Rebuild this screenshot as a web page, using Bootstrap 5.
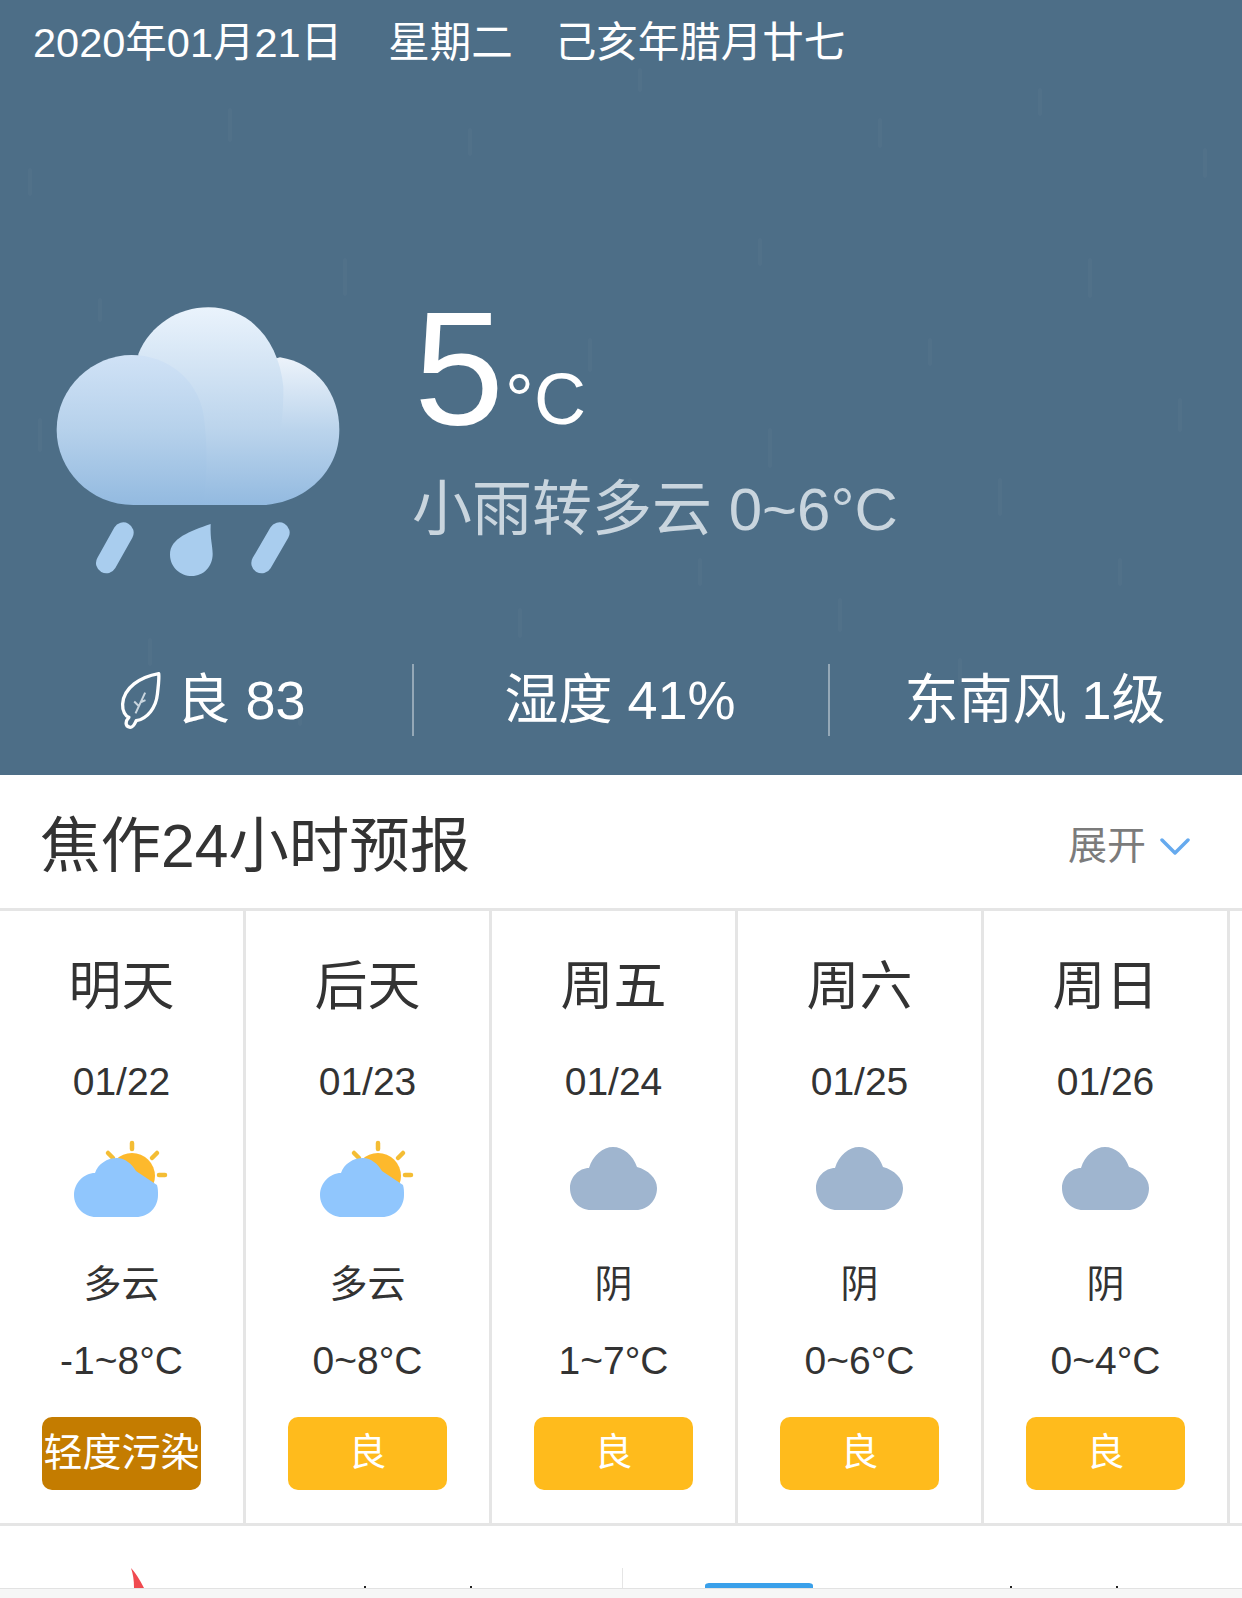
<!DOCTYPE html>
<html lang="zh">
<head>
  <meta charset="UTF-8">
  <title>焦作天气</title>
  <link href="https://cdn.jsdelivr.net/npm/bootstrap@5.3.0/dist/css/bootstrap.min.css" rel="stylesheet">
  <style>
    body { width: 1242px; height: 1598px; overflow: hidden; font-family: "Liberation Sans", "Noto Sans CJK SC", sans-serif; color: #333; background: #fff; }
    .wx-head { height: 775px; background: #4d6e87; color: #fff; position: relative; overflow: hidden; }
    .wx-rain { position: absolute; left: 0; top: 0; }
    .wx-head > div { position: relative; }
    .wx-date { padding: 18px 0 0 33px; height: 280px; font-size: 41.5px; line-height: 50px; }
    .wx-date span { margin-right: 46px; }
    .wx-date span + span { margin-right: 42px; }
    .wx-temp { font-size: 162px; line-height: 1; margin-top: 7px; height: 160px; margin-left: 2px; }
    .wx-unit { font-size: 72px; margin-left: 1px; }
    .wx-desc { font-size: 60px; line-height: 70px; color: #c9d5de; margin-top: 28px; }
    .wx-stats { font-size: 54px; line-height: 72px; margin-top: 64px; }
    .wx-stat { height: 72px; }
    .wx-stat-first { width: 412px; padding-left: 14px; }
    .wx-stat-mid { width: 414px; padding-right: 2px; }
    .wx-stat-last { padding-right: 2px; }
    .wx-leaf { margin-right: 14px; }
    .wx-sep { width: 2px; height: 72px; background: rgba(255,255,255,.4); }
    .wx-title { height: 133px; padding: 10px 52px 0 40px; }
    .wx-title h1 { font-size: 60.5px; margin: 0; font-weight: 400; color: #333; }
    .wx-more { font-size: 39px; color: #7b7b7b; margin-right: 14px; }
    .wx-days { border-top: 3px solid #e5e5e5; border-bottom: 3px solid #e5e5e5; height: 618px; }
    .wx-day { width: 246px; height: 612px; border-right: 3px solid #e5e5e5; padding-top: 51px; }
    .wx-name { font-size: 53px; line-height: 50px; }
    .wx-line { font-size: 39px; line-height: 50px; color: #333; }
    .wx-d { margin-top: 45px; }
    .wx-ico { display: block; margin: 33px auto 0; }
    .wx-cond { margin-top: 39px; font-size: 38px; }
    .wx-range { margin-top: 27px; }
    .wx-aqi { width: 159px; height: 73px; margin: 31px auto 0; border-radius: 10px; background: #ffbb1c; color: #fff; font-size: 38px; line-height: 71px; }
    .wx-aqi-bad { background: #c47c00; font-size: 39px; }
    .wx-tail { height: 62px; }
    .wx-foot { height: 10px; background: #f6f6f6; border-top: 1px solid #e2e2e2; }
  </style>
</head>
<body>

<div class="wx-head d-flex flex-column">
  <svg class="wx-rain" width="1242" height="775" stroke="#fff" stroke-opacity=".025" stroke-width="4" stroke-linecap="round">
    <path d="M40 420v30M100 300v20M150 640v24M230 110v30M300 700v24M345 260v34M470 130v24M520 610v26M590 340v30M640 70v20M700 560v24M770 430v36M760 240v24M840 600v30M880 120v26M930 340v24M1000 480v34M1040 90v24M1090 260v36M1120 560v24M1180 400v30M1205 150v26M630 480v24M960 660v24M30 170v24"/>
  </svg>
  <div class="wx-date"><span>2020年01月21日</span><span>星期二</span><span>己亥年腊月廿七</span></div>
  <div class="d-flex">
    <svg width="400" height="320" viewBox="0 0 1200 960">
      <defs>
        <linearGradient id="gr" gradientUnits="userSpaceOnUse" x1="0" y1="225" x2="0" y2="675"><stop offset="0" stop-color="#eef4fb"/><stop offset=".5" stop-color="#bbd4ec"/><stop offset="1" stop-color="#93bae0"/></linearGradient>
        <linearGradient id="gm" gradientUnits="userSpaceOnUse" x1="0" y1="82" x2="0" y2="675"><stop offset="0" stop-color="#eaf3fc"/><stop offset=".62" stop-color="#bbd4ec"/><stop offset="1" stop-color="#93bae0"/></linearGradient>
        <linearGradient id="gl" gradientUnits="userSpaceOnUse" x1="0" y1="225" x2="0" y2="675"><stop offset="0" stop-color="#d0e2f6"/><stop offset=".5" stop-color="#b6d1eb"/><stop offset="1" stop-color="#93bae0"/></linearGradient>
      </defs>
      <path fill="url(#gr)" d="M600 675V300L840 232C950 250 1018 340 1018 450 1018 585 900 675 780 675Z"/>
      <path fill="url(#gm)" d="M415 222C450 135 535 82 625 82 740 82 835 170 850 320 852 420 830 560 800 675H405Z"/>
      <path fill="url(#gl)" d="M400 675C270 675 170 570 170 450 170 320 280 225 395 225 500 225 590 295 610 400 625 500 620 600 610 675Z"/>
      <g stroke="#a9cdee" stroke-width="62" stroke-linecap="round"><path d="M370 758 319 849M838 758 785 849"/></g>
      <path fill="#a9cdee" d="M632 732c-2 45 6 65 6 90 0 38-28 66-62 66-36 0-66-28-66-64 0-50 60-70 122-92z"/>
    </svg>
    <div class="ms-2 ps-1">
      <div class="wx-temp">5<span class="wx-unit">°C</span></div>
      <div class="wx-desc">小雨转多云 0~6°C</div>
    </div>
  </div>
  <div class="wx-stats d-flex align-items-center">
    <div class="wx-stat wx-stat-first d-flex align-items-center justify-content-center">
      <svg class="wx-leaf" width="42" height="58" viewBox="180 100 125 175" fill="none" stroke="#fff" stroke-width="10" stroke-linejoin="round">
        <path d="M296 108C240 118 190 150 187 200 186 222 196 236 206 240 196 250 192 268 210 270 220 270 224 258 228 250 262 244 288 210 292 170 294 148 298 125 296 108Z"/>
        <path stroke="#c9d5de" stroke-width="6" d="M255 165 226 228M235 205 222 192M240 195 256 188"/>
      </svg>
      <span>良 83</span>
    </div>
    <div class="wx-sep"></div>
    <div class="wx-stat wx-stat-mid text-center">湿度 41%</div>
    <div class="wx-sep"></div>
    <div class="wx-stat wx-stat-last text-center flex-fill">东南风 1级</div>
  </div>
</div>

<div class="wx-title d-flex align-items-center justify-content-between">
  <h1>焦作24小时预报</h1>
  <div class="d-flex align-items-center">
    <span class="wx-more">展开</span>
    <svg width="30" height="18" viewBox="0 0 30 18" fill="none" stroke="#66aaee" stroke-width="3.5" stroke-linecap="round" stroke-linejoin="round"><path d="M2 2 15 15 28 2"/></svg>
  </div>
</div>

<div class="wx-days d-flex" id="days"></div>

<div class="wx-tail">
  <svg width="1242" height="62" class="d-block">
    <path fill="#f04a50" d="M131 42c4 4 9 12 13 20h-10c0-8-1-14-3-20z"/>
    <rect x="622" y="42" width="1" height="20" fill="#e5e5e5"/>
    <path fill="#3aa0ea" d="M705 62v-2c0-3 3-3 6-3h96c3 0 6 0 6 3v2z"/>
    <path fill="#222" d="M364 60h2v2h-2zM470 60h2v2h-2zM1010 60h2v2h-2zM1116 60h2v2h-2z"/>
  </svg>
</div>
<div class="wx-foot"></div>

<script>
// 五天预报
const sunIcon = '<svg class="wx-ico" width="100" height="80" viewBox="0 0 100 80">' +
  '<g stroke="#f4bd34" stroke-width="4.5" stroke-linecap="round"><path d="M60 3V9M36 13 41 18M85 13 80 18M87 35H93"/></g>' +
  '<circle cx="60" cy="36" r="23" fill="#fdb92c"/>' +
  '<path fill="#90c6fd" d="M24 77C12 77 2 67 2 55 2 43 12 33 23 33 26 24 35 18 45 18 53 18 60 24 64 31L85 45C86 48 86 52 86 55 86 67 77 77 64 77Z"/></svg>';
const cloudIcon = '<svg class="wx-ico" width="100" height="80" viewBox="0 0 100 80">' +
  '<path fill="#9fb5cf" d="M27 70C15 70 6 60 6 48 6 37 15 28 25 28 29 15 39 7 49 7 59 7 69 15 73 27 84 30 93 38 93 48 93 60 84 70 72 70Z"/></svg>';
const dias = [
  ['明天', '01/22', sunIcon, '多云', '-1~8°C', '轻度污染', 1],
  ['后天', '01/23', sunIcon, '多云', '0~8°C', '良', 0],
  ['周五', '01/24', cloudIcon, '阴', '1~7°C', '良', 0],
  ['周六', '01/25', cloudIcon, '阴', '0~6°C', '良', 0],
  ['周日', '01/26', cloudIcon, '阴', '0~4°C', '良', 0]
];
let html = '';
dias.forEach(d => {
  html += `<div class="wx-day text-center flex-shrink-0">
    <div class="wx-name">${d[0]}</div>
    <div class="wx-line wx-d">${d[1]}</div>
    ${d[2]}
    <div class="wx-line wx-cond">${d[3]}</div>
    <div class="wx-line wx-range">${d[4]}</div>
    <div class="wx-aqi ${d[6] ? 'wx-aqi-bad' : ''}">${d[5]}</div>
  </div>`;
});
document.getElementById('days').innerHTML = html;
</script>

<script src="https://cdn.jsdelivr.net/npm/bootstrap@5.3.0/dist/js/bootstrap.bundle.min.js"></script>
</body>
</html>
